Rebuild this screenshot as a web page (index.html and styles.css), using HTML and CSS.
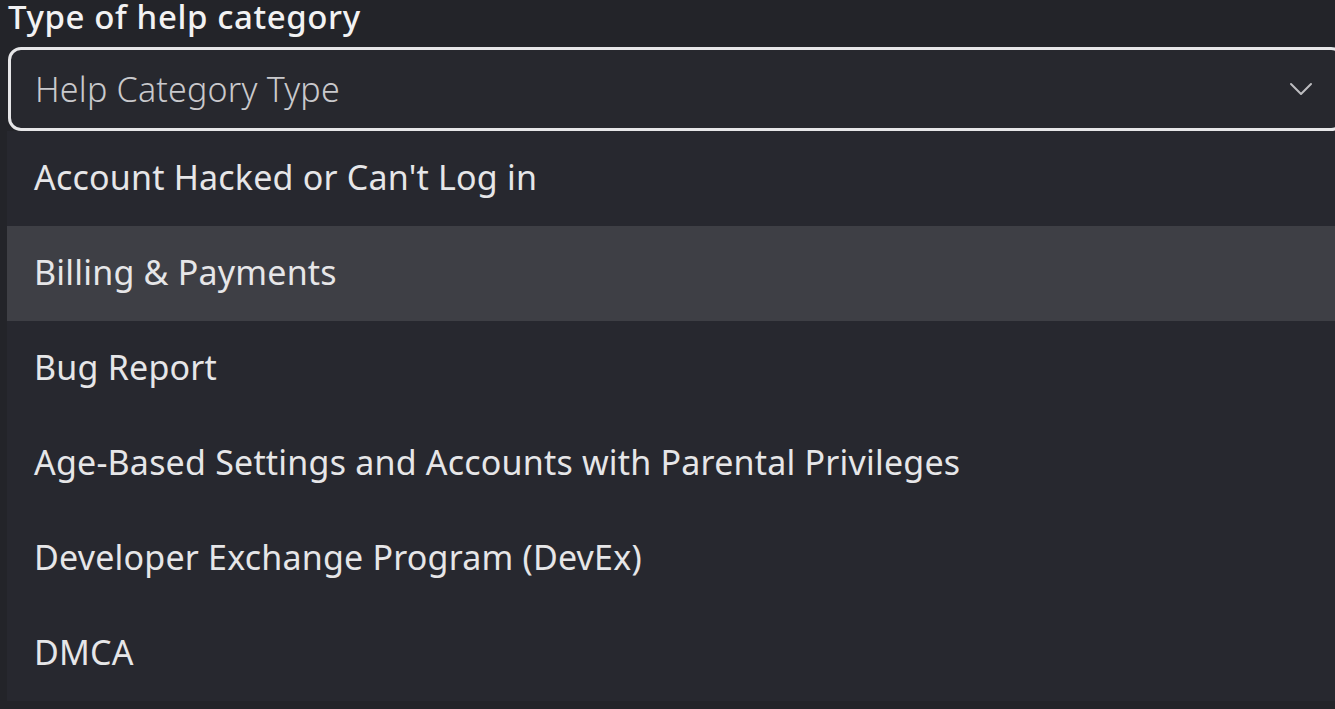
FILE: index.html
```html
<!DOCTYPE html>
<html>
<head>
<meta charset="utf-8">
<link rel="stylesheet" href="styles.css">
</head>
<body>
<div class="page">
  <div class="label">Type of help category</div>
  <div class="select">
    <span class="placeholder">Help Category Type</span>
    <svg class="chev" width="24" height="14" viewBox="0 0 24 14"><path d="M2 2 L12 12 L22 2" fill="none" stroke="#bdbdc0" stroke-width="2" stroke-linecap="round" stroke-linejoin="round"/></svg>
  </div>
  <ul class="menu">
    <li class="item">Account Hacked or Can't Log in</li>
    <li class="item hover">Billing &amp; Payments</li>
    <li class="item">Bug Report</li>
    <li class="item">Age-Based Settings and Accounts with Parental Privileges</li>
    <li class="item">Developer Exchange Program (DevEx)</li>
    <li class="item">DMCA</li>
  </ul>
</div>
</body>
</html>
```
FILE: styles.css
```css
html, body {
  margin: 0;
  padding: 0;
  background: #232429;
  overflow: hidden;
  height: 100%;
}
.page {
  font-family: "Noto Sans", "Open Sans", sans-serif;
  color: #e8e8ea;
  width: 1345px;
}
.label {
  font-size: 33px;
  font-weight: 500;
  line-height: 34px;
  letter-spacing: 0.6px;
  margin-top: 0;
  padding-left: 8px;
  height: 47px;
  color: #f2f2f3;
}
.select {
  margin-left: 8px;
  height: 78px;
  border: 3px solid #e6e6e8;
  border-radius: 13px;
  background: #27282e;
  display: flex;
  align-items: center;
  justify-content: space-between;
  padding: 0 28px 0 24px;
  box-sizing: content-box;
  width: 1278px;
}
.placeholder {
  font-size: 34px;
  font-weight: 300;
  letter-spacing: 0.2px;
  color: #c9c9cc;
}
.menu {
  list-style: none;
  margin: 0 0 0 7px;
  padding: 0;
  background: #27282f;
}
.item {
  height: 95px;
  box-sizing: border-box;
  padding-bottom: 3px;
  display: flex;
  align-items: center;
  padding-left: 27px;
  font-size: 34px;
  letter-spacing: 0.2px;
  color: #e6e6e8;
}
.item.hover {
  background: #3e3f45;
}
```
